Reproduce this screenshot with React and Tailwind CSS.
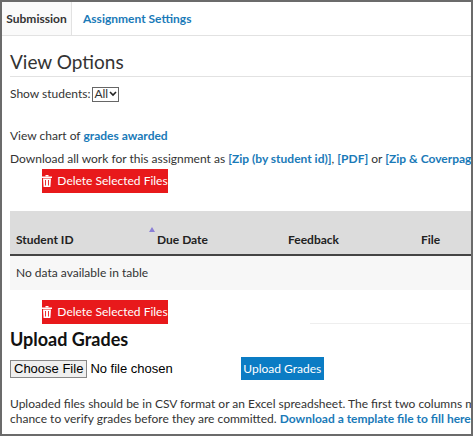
import React from "react";

function Trash() {
  return (
    <svg width="10" height="12" viewBox="0 0 10 12" className="mr-[5px] shrink-0">
      <rect x="0" y="1.5" width="10" height="1.5" fill="#fff" />
      <rect x="3.5" y="0" width="3" height="1.5" fill="#fff" />
      <path d="M1 3.5h8l-0.6 8.5H1.6z" fill="#fff" />
      <rect x="3" y="5" width="0.9" height="5.5" fill="#e8191b" />
      <rect x="6.1" y="5" width="0.9" height="5.5" fill="#e8191b" />
    </svg>
  );
}

function DelBtn() {
  return (
    <button className="ml-[32px] flex h-[24px] w-[126px] shrink-0 items-center justify-center whitespace-nowrap bg-[#e8191b] text-[12px] text-white">
      <Trash />Delete Selected Files
    </button>
  );
}

export default function App() {
  const link = "text-[#1a7ab8] font-bold";
  return (
    <div className="h-[436px] w-[473px] overflow-hidden whitespace-nowrap border-2 border-[#6b6b6b] bg-white font-[Lato,sans-serif] text-[#333]">
      <div className="flex h-[34px] border-b border-[#e2e2e2] text-[12px] font-bold">
        <div className="flex w-[70px] items-center justify-center border-r border-[#e2e2e2] bg-[#fafafa] text-[#333]">Submission</div>
        <div className="flex items-center px-[11px] text-[#1a7ab8]">Assignment Settings</div>
      </div>
      <div className="pl-[8px]">
        <div className="mt-[14px] border-b border-[#e2e2e2] pb-[2px] text-[19px] leading-[24px]">View Options</div>
        <div className="mt-[8px] flex items-center text-[12px]">
          Show students:
          <span className="ml-[2px] flex h-[15px] items-center border border-[#666] px-[1px] text-[12px]">All<svg width="8" height="6" viewBox="0 0 8 6" className="ml-[1px]"><path d="M1 1l3 3 3-3" stroke="#222" strokeWidth="1.6" fill="none"/></svg></span>
        </div>
        <div className="mt-[24px] text-[12px]">View chart of <span className={link}>grades awarded</span></div>
        <div className="mt-[5px] text-[12px]">Download all work for this assignment as <span className={link}>[Zip (by student id)]</span>, <span className={link}>[PDF]</span> or <span className={link}>[Zip &amp; Coverpages]</span></div>
        <div className="mt-[1px] flex"><DelBtn /></div>
        <div className="mt-[18px]">
          <div className="relative flex h-[45px] items-end border-b-2 border-[#444] bg-[#dcdcdc] pb-[5px] text-[12px] font-bold text-[#222]">
            <div className="w-[147px] shrink-0 pl-[6px]">Student ID</div>
            <div className="w-[131px] shrink-0">Due Date</div>
            <div className="w-[133px] shrink-0">Feedback</div>
            <div>File</div>
            <svg className="absolute left-[139px] top-[16px]" width="6" height="5" viewBox="0 0 6 5"><path d="M3 0l3 5H0z" fill="#8a7fd6"/></svg>
          </div>
          <div className="flex h-[34px] items-center bg-[#f7f7f7] pl-[6px] text-[12px]">No data available in table</div>
        </div>
        <div className="mt-[10px] flex items-end">
          <DelBtn />
          <div className="ml-auto h-px w-[161px] bg-[#eee]" />
        </div>
        <div className="mt-[3px] text-[18px] font-bold leading-[24px] text-[#111]">Upload Grades</div>
        <div className="mt-[6px] flex items-center">
          <span className="flex h-[18px] items-center border border-[#888] bg-[#efefef] px-[3px] font-[Liberation_Sans,sans-serif] text-[13px] text-black">Choose File</span>
          <span className="ml-[3px] font-[Liberation_Sans,sans-serif] text-[13px] text-black">No file chosen</span>
          <button className="ml-[68px] h-[23px] w-[83px] shrink-0 whitespace-nowrap bg-[#0b7cc4] text-[12px] text-white">Upload Grades</button>
        </div>
        <div className="mt-[16px] text-[12px] leading-[15px]">
          Uploaded files should be in CSV format or an Excel spreadsheet. The first two columns must be students' IDs and grades.<br />
          chance to verify grades before they are committed. <span className={link}>Download a template file to fill here.</span>
        </div>
      </div>
    </div>
  );
}
